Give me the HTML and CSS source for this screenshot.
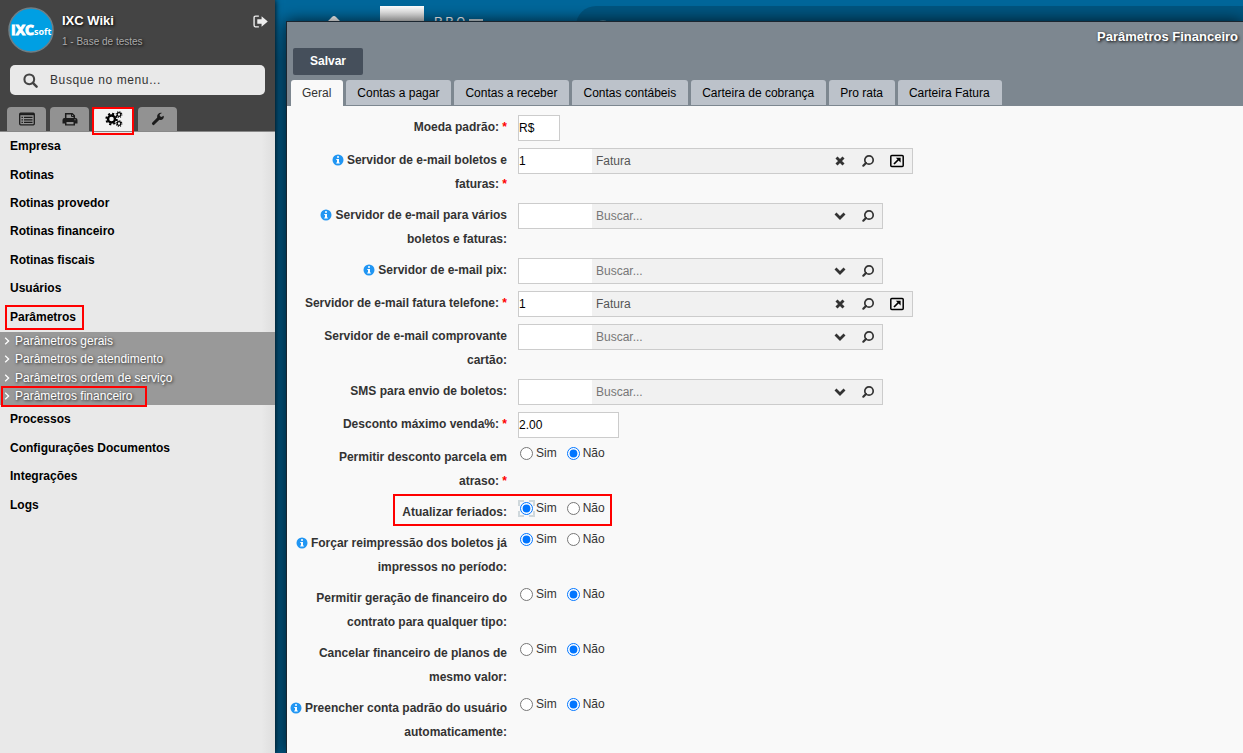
FILE: index.html
```html
<!DOCTYPE html>
<html lang="pt-BR">
<head>
<meta charset="utf-8">
<title>Parâmetros Financeiro</title>
<link rel="stylesheet" href="styles.css">
</head>
<body>
<svg class="sprite" aria-hidden="true">
  <symbol id="i-search" viewBox="0 0 14 14"><circle cx="8" cy="6" r="4.200" fill="none" stroke="currentColor" stroke-width="1.700"/><path d="M5 9 2.300 11.700" stroke="currentColor" stroke-width="2.200" stroke-linecap="round"/></symbol>
  <symbol id="i-down" viewBox="0 0 12 12"><path d="M1.500 3.600 6 8.100l4.500-4.500" fill="none" stroke="currentColor" stroke-width="2.800"/></symbol>
  <symbol id="i-clear" viewBox="0 0 10 10"><path d="M1.500 1.500 8.500 8.500M8.500 1.500 1.500 8.500" stroke="currentColor" stroke-width="2.900"/></symbol>
  <symbol id="i-open" viewBox="0 0 14 14"><rect x=".8" y="1.500" width="12.400" height="11" rx="1" fill="none" stroke="currentColor" stroke-width="1.500"/><path d="M4 10 8.500 5.500" stroke="currentColor" stroke-width="1.700"/><path d="M5.800 3.800h4.800v4.800z" fill="currentColor"/></symbol>
  <symbol id="i-info" viewBox="0 0 12 12"><circle cx="6" cy="6" r="5.500" fill="currentColor"/><path d="M5 2.200h2v1.600H5zM4.300 4.900H7v3.500h.8v1.100H4.200V8.400H5V6h-.7z" fill="#fff"/></symbol>
  <symbol id="i-arrow" viewBox="0 0 6 8"><path d="M1.200.8 4.600 4 1.200 7.200" fill="none" stroke="currentColor" stroke-width="1.300"/></symbol>
</svg>
<div class="app">
  <aside class="sidebar">
    <header class="side-head">
      <div class="profile">
        <svg class="logo" viewBox="0 0 46 46" role="img" aria-label="IXCsoft"><circle cx="23" cy="23" r="22" fill="#009fe3" stroke="#6f7f86" stroke-width="1.500"/><text x="3" y="28" class="logo-main">IXC</text><text x="26" y="28" class="logo-sub">soft</text></svg>
        <div class="who"><strong>IXC Wiki</strong><small>1 - Base de testes</small></div>
        <button class="logout" aria-label="Sair"><svg viewBox="0 0 14 12"><path d="M5.500 1H2.500Q1 1 1 2.500v7Q1 11 2.500 11h3" fill="none" stroke="currentColor" stroke-width="1.300"/><path d="M4 4h4V1l5.800 5L8 11V8H4z" fill="currentColor"/></svg></button>
      </div>
      <label class="search"><svg viewBox="0 0 16 16"><circle cx="6.700" cy="6.700" r="5.200" fill="none" stroke="currentColor" stroke-width="2.200"/><path d="m10.500 10.500 4 4" stroke="currentColor" stroke-width="2.600" stroke-linecap="round"/></svg><input type="text" placeholder="Busque no menu..." aria-label="Busque no menu"></label>
      <div class="side-tabs">
        <button aria-label="Cadastros"><svg viewBox="0 0 16 14"><rect x=".7" y="1.200" width="14.600" height="11.600" rx="1" fill="none" stroke="currentColor" stroke-width="1.300"/><path d="M1 2.200h14" stroke="currentColor" stroke-width="2"/><path d="M2.500 5.400h1.400M5 5.400h8.500M2.500 7.800h1.400M5 7.800h8.500M2.500 10.300h1.400M5 10.300h8.500" stroke="currentColor" stroke-width="1.200"/></svg></button>
        <button aria-label="Relatórios"><svg viewBox="0 0 16 14"><path d="M3.700 6.500V1.700h6.500l2.100 2v2.800" fill="none" stroke="currentColor" stroke-width="1.500"/><path d="M9.500 1.500v3h3" fill="none" stroke="currentColor"/><path fill-rule="evenodd" d="M2.500 6h11Q15.500 6 15.500 8v3.500h-2.500v2h-10v-2H.5V8Q.5 6 2.500 6zM4.500 10v2.200h7V10zm8-2.700v1h1v-1z" fill="currentColor"/></svg></button>
        <button class="on" aria-label="Configurações"><svg viewBox="0 0 18 16"><g fill="none" stroke="currentColor"><circle cx="6.500" cy="8" r="3.500" stroke-width="2.400"/><circle cx="6.500" cy="8" r="5.300" stroke-width="1.800" stroke-dasharray="2.100 2.060"/><circle cx="14" cy="3.500" r="1.800" stroke-width="1.200"/><circle cx="14" cy="3.500" r="2.800" stroke-width="1.100" stroke-dasharray="1.100 1.100"/><circle cx="14" cy="12.500" r="1.800" stroke-width="1.200"/><circle cx="14" cy="12.500" r="2.800" stroke-width="1.100" stroke-dasharray="1.100 1.100"/></g></svg></button>
        <button aria-label="Ferramentas"><svg viewBox="0 0 16 16"><path d="M2.800 13.200 9 7" stroke="currentColor" stroke-width="3.400" stroke-linecap="round"/><path d="M14.500 4.200 11.800 5.700 10 4.700V2.600L12.500 1C9.500.2 6.700 2.400 7 5.500 7.300 8 9.500 9.300 11.500 9c2.200-.3 3.700-2.500 3-4.800z" fill="currentColor"/></svg></button>
      </div>
    </header>
    <nav>
      <ul class="menu menu-top">
        <li><a href="#">Empresa</a></li><li><a href="#">Rotinas</a></li><li><a href="#">Rotinas provedor</a></li><li><a href="#">Rotinas financeiro</a></li><li><a href="#">Rotinas fiscais</a></li><li><a href="#">Usuários</a></li><li><a href="#" class="marked">Parâmetros</a></li>
      </ul>
      <ul class="submenu">
        <li><a href="#"><svg><use href="#i-arrow"/></svg>Parâmetros gerais</a></li>
        <li><a href="#"><svg><use href="#i-arrow"/></svg>Parâmetros de atendimento</a></li>
        <li><a href="#"><svg><use href="#i-arrow"/></svg>Parâmetros ordem de serviço</a></li>
        <li><a href="#" class="marked"><svg><use href="#i-arrow"/></svg>Parâmetros financeiro</a></li>
      </ul>
      <ul class="menu menu-rest">
        <li><a href="#">Processos</a></li><li><a href="#">Configurações Documentos</a></li><li><a href="#">Integrações</a></li><li><a href="#">Logs</a></li>
      </ul>
    </nav>
  </aside>
  <main class="desktop">
    <div class="topbar">
      <svg class="home" viewBox="0 0 20 18"><path d="M10 0Q11 0 12 1l7 7-1 2h-1v8H3v-8H2L1 8l7-7Q9 0 10 0z" fill="currentColor"/></svg>
      <div class="thumb"></div>
      <div class="brand">PRO<span class="bar"></span></div>
      <div class="pill"><svg viewBox="0 0 14 14"><circle cx="7" cy="7" r="6" fill="none" stroke="currentColor" stroke-width="2"/></svg></div>
    </div>
    <section class="window">
      <header class="win-head">
        <h1>Parâmetros Financeiro</h1>
        <button class="save">Salvar</button>
        <div class="tabs" role="tablist">
          <button role="tab" class="on" aria-selected="true">Geral</button><button role="tab">Contas a pagar</button><button role="tab">Contas a receber</button><button role="tab">Contas contábeis</button><button role="tab">Carteira de cobrança</button><button role="tab">Pro rata</button><button role="tab">Carteira Fatura</button>
        </div>
      </header>
      <form class="form">
        <div class="row"><label class="lb" for="f1">Moeda padrão:&nbsp;<b>*</b></label><input id="f1" class="txt short" type="text" value="R$"></div>
        <div class="row"><label class="lb" for="f2"><svg><use href="#i-info"/></svg> Servidor de e-mail boletos e faturas:&nbsp;<b>*</b></label>
          <div class="lookup wide"><input id="f2" type="text" value="1"><input class="desc" type="text" value="Fatura" aria-label="Descrição"><button type="button" aria-label="Limpar"><svg class="s10"><use href="#i-clear"/></svg></button><button type="button" aria-label="Buscar"><svg><use href="#i-search"/></svg></button><button type="button" class="open" aria-label="Abrir"><svg><use href="#i-open"/></svg></button></div></div>
        <div class="row"><label class="lb" for="f3"><svg><use href="#i-info"/></svg> Servidor de e-mail para vários boletos e faturas:</label>
          <div class="lookup"><input id="f3" type="text"><input class="desc" type="text" placeholder="Buscar..." aria-label="Descrição"><button type="button" aria-label="Listar"><svg class="s12"><use href="#i-down"/></svg></button><button type="button" aria-label="Buscar"><svg><use href="#i-search"/></svg></button></div></div>
        <div class="row"><label class="lb" for="f4"><svg><use href="#i-info"/></svg> Servidor de e-mail pix:</label>
          <div class="lookup"><input id="f4" type="text"><input class="desc" type="text" placeholder="Buscar..." aria-label="Descrição"><button type="button" aria-label="Listar"><svg class="s12"><use href="#i-down"/></svg></button><button type="button" aria-label="Buscar"><svg><use href="#i-search"/></svg></button></div></div>
        <div class="row"><label class="lb" for="f5">Servidor de e-mail fatura telefone:&nbsp;<b>*</b></label>
          <div class="lookup wide"><input id="f5" type="text" value="1"><input class="desc" type="text" value="Fatura" aria-label="Descrição"><button type="button" aria-label="Limpar"><svg class="s10"><use href="#i-clear"/></svg></button><button type="button" aria-label="Buscar"><svg><use href="#i-search"/></svg></button><button type="button" class="open" aria-label="Abrir"><svg><use href="#i-open"/></svg></button></div></div>
        <div class="row"><label class="lb" for="f6">Servidor de e-mail comprovante cartão:</label>
          <div class="lookup"><input id="f6" type="text"><input class="desc" type="text" placeholder="Buscar..." aria-label="Descrição"><button type="button" aria-label="Listar"><svg class="s12"><use href="#i-down"/></svg></button><button type="button" aria-label="Buscar"><svg><use href="#i-search"/></svg></button></div></div>
        <div class="row"><label class="lb" for="f7">SMS para envio de boletos:</label>
          <div class="lookup"><input id="f7" type="text"><input class="desc" type="text" placeholder="Buscar..." aria-label="Descrição"><button type="button" aria-label="Listar"><svg class="s12"><use href="#i-down"/></svg></button><button type="button" aria-label="Buscar"><svg><use href="#i-search"/></svg></button></div></div>
        <div class="row"><label class="lb" for="f8">Desconto máximo venda%:&nbsp;<b>*</b></label><input id="f8" class="txt" type="text" value="2.00"></div>
        <div class="row" role="radiogroup" aria-labelledby="g1"><span class="lb" id="g1">Permitir desconto parcela em atraso:&nbsp;<b>*</b></span><div class="radios"><label><input type="radio" name="r1">Sim</label><label><input type="radio" name="r1" checked>Não</label></div></div>
        <div class="row boxed" role="radiogroup" aria-labelledby="g2"><span class="lb" id="g2">Atualizar feriados:</span><div class="radios"><label><input class="focused" type="radio" name="r2" checked>Sim</label><label><input type="radio" name="r2">Não</label></div></div>
        <div class="row" role="radiogroup" aria-labelledby="g3"><span class="lb" id="g3"><svg><use href="#i-info"/></svg> Forçar reimpressão dos boletos já impressos no período:</span><div class="radios"><label><input type="radio" name="r3" checked>Sim</label><label><input type="radio" name="r3">Não</label></div></div>
        <div class="row" role="radiogroup" aria-labelledby="g4"><span class="lb" id="g4">Permitir geração de financeiro do contrato para qualquer tipo:</span><div class="radios"><label><input type="radio" name="r4">Sim</label><label><input type="radio" name="r4" checked>Não</label></div></div>
        <div class="row" role="radiogroup" aria-labelledby="g5"><span class="lb" id="g5">Cancelar financeiro de planos de mesmo valor:</span><div class="radios"><label><input type="radio" name="r5">Sim</label><label><input type="radio" name="r5" checked>Não</label></div></div>
        <div class="row" role="radiogroup" aria-labelledby="g6"><span class="lb" id="g6"><svg><use href="#i-info"/></svg> Preencher conta padrão do usuário automaticamente:</span><div class="radios"><label><input type="radio" name="r6">Sim</label><label><input type="radio" name="r6" checked>Não</label></div></div>
      </form>
    </section>
  </main>
</div>
</body>
</html>
```
FILE: styles.css
```css
*, *::before, *::after { box-sizing: border-box; }
body { margin: 0; font: 12px "Liberation Sans", Arial, sans-serif; color: #333; }
button, input { font: inherit; margin: 0; padding: 0; border: 0; background: none; }
ul { list-style: none; margin: 0; padding: 0; }
a { color: inherit; text-decoration: none; }
svg { display: block; flex: none; }
.sprite { position: absolute; width: 0; height: 0; }
.app { display: flex; height: 100vh; overflow: hidden; }

/* sidebar */
.sidebar { width: 275px; flex: none; background: linear-gradient(90deg, #e9e9e9 95%, #dedede); box-shadow: 0 0 6px #000; z-index: 1; }
.side-head { background: #444; border-bottom: 1px solid #888; padding: 7px 10px 0 7px; }
.profile { display: flex; height: 46px; padding-left: 1px; }
.logo { width: 46px; height: 46px; }
.logo-main { font: bold 14px "Open Sans", sans-serif; fill: #fff; stroke: #fff; }
.logo-sub { font: bold 9px "Open Sans", sans-serif; fill: #fff; }
.who { flex: 1; display: flex; flex-direction: column; gap: 8px; padding: 6px 0 0 8px; }
.who strong { font-size: 13px; line-height: 15px; color: #fff; text-shadow: 1px 1px 3px #000; }
.who small { font-size: 10px; line-height: 12px; color: #aaa; text-shadow: 1px 1px 3px #000; }
.logout { color: #eee; align-self: flex-start; margin-top: 8px; margin-right: -3px; }
.logout svg { width: 15px; height: 13px; }
.search { display: flex; align-items: center; gap: 12px; height: 30px; margin: 12px 0 12px 3px; padding: 0 13px; background: #e9e9e9; border-radius: 5px; color: #444; }
.search svg { width: 15px; height: 15px; }
.search input { flex: 1; min-width: 0; letter-spacing: .05em; color: #333; }
.search input::placeholder { color: #333; }
.side-tabs { display: flex; gap: 4px; }
.side-tabs button { width: 39px; height: 24px; display: grid; place-items: center; background: #929292; color: #1c1c1c; border-radius: 4px 4px 0 0; }
.side-tabs svg { width: 16px; height: 14px; }
.side-tabs .on { position: relative; margin: 0 1px; background: #f2f2f2; color: #000; }
.side-tabs .on svg { width: 18px; height: 16px; }
.side-tabs .on::after, .marked::after, .boxed::after { content: ""; position: absolute; border: 2px solid #f00; pointer-events: none; }
.side-tabs .on::after { inset: 0 -1px -4px -2px; }
.menu { display: grid; grid-auto-rows: 1fr; font-weight: bold; color: #000; padding-left: 10px; }
.menu li { display: flex; align-items: center; }
.menu-top { min-height: 200px; padding-bottom: 1px; }
.menu-rest { min-height: 114px; }
.marked { position: relative; }
.menu .marked::after { inset: -5px -8px -6px -5px; }
.submenu { background: #999; color: #fff; padding-left: 4px; min-height: 73px; display: grid; }
.submenu li { display: flex; align-items: center; }
.submenu a { display: flex; align-items: center; gap: 5px; text-shadow: 1px 1px 3px #222; }
.submenu svg { width: 6px; height: 8px; }
.submenu .marked::after { inset: -3px -15px -4px -3px; }

/* desktop */
.desktop { position: relative; flex: 1; min-width: 0; background: linear-gradient(#00679b 12px, #005580 60px); }
.topbar { display: flex; align-items: flex-start; height: 50px; padding: 6px 0 0 49px; overflow: hidden; color: #fff; }
.home { width: 20px; height: 18px; margin: 10px 36px 0 0; }
.thumb { width: 44px; height: 40px; background: linear-gradient(#fff, #ccc 16px); }
.brand { display: flex; align-items: center; gap: 1px; width: 152px; padding: 8px 0 0 10px; font: 13px/15px Roboto, sans-serif; letter-spacing: 3px; }
.bar { width: 14px; height: 2px; margin-bottom: 3px; background: #ccd8de; }
.pill { flex: 1; height: 40px; background: #005580; border-radius: 20px 0 0 20px; padding: 14px 20px; color: #46809e; }
.pill svg { width: 14px; height: 14px; }
.window { position: absolute; inset: 21px 0 0 11px; border: solid #1b2630; border-width: 1px 0 0 1px; background: #f9f9f9; box-shadow: 0 0 15px rgba(0,0,0,.7); }
.win-head { display: flex; flex-direction: column; align-items: flex-start; background: #7d8790; padding: 7px 0 0 4px; border-bottom: 1px solid #7d8790; }
.win-head h1 { align-self: flex-end; margin: 0 5px 4px 0; font-size: 13px; line-height: 15px; color: #fff; text-shadow: 1px 1px 3px #000; }
.save { width: 70px; height: 27px; margin: 0 0 5px 2px; padding-bottom: 2px; background: #454f5b; color: #fff; font-weight: bold; border-radius: 2px; }
.tabs { display: flex; gap: 3px; }
.tabs button { height: 25px; padding: 0 12px 0 11px; background: #bcc2ca; color: #000; border-radius: 3px 3px 0 0; }
.tabs .on { background: #f9f9f9; color: #333; height: 26px; margin-bottom: -1px; }

/* form */
.form { display: flex; flex-direction: column; gap: 7px; padding-top: 9px; }
.row { position: relative; display: grid; grid-template-columns: 220px 1fr; column-gap: 11px; align-items: start; }
.lb { padding-left: 1px; font-weight: bold; text-align: right; line-height: 24px; }
.lb b { color: #f00; }
.lb svg { display: inline-block; width: 12px; height: 12px; vertical-align: -2px; color: #2196f3; }
.txt { width: 101px; height: 26px; border: 1px solid #ccc; background: #fff; color: #000; }
.short { width: 42px; }
.lookup { display: flex; width: 365px; height: 26px; border: 1px solid #ccc; background: #f1f1f1; }
.lookup.wide { width: 395px; }
.lookup > input:first-child { width: 73px; background: #fff; color: #000; }
.lookup .desc { flex: 1; min-width: 0; padding-left: 4px; color: #555; }
.lookup .desc::placeholder { color: #777; }
.lookup button { width: 28px; display: grid; place-items: center; color: #333; }
.lookup button svg { width: 14px; height: 14px; }
.lookup button .s10 { width: 10px; height: 10px; }
.lookup button .s12 { width: 12px; height: 12px; }
.lookup .open { width: 30px; color: #000; }
.radios { display: flex; gap: 8px; }
.radios label { display: flex; align-items: center; gap: 3px; height: 16px; }
.radios input { width: 13px; height: 13px; margin-left: 2px; }
.radios .focused { outline: 2px dashed #cfd8dc; outline-offset: 0; }
.boxed::after { left: 106px; width: 219px; top: -6px; height: 32px; }
```
